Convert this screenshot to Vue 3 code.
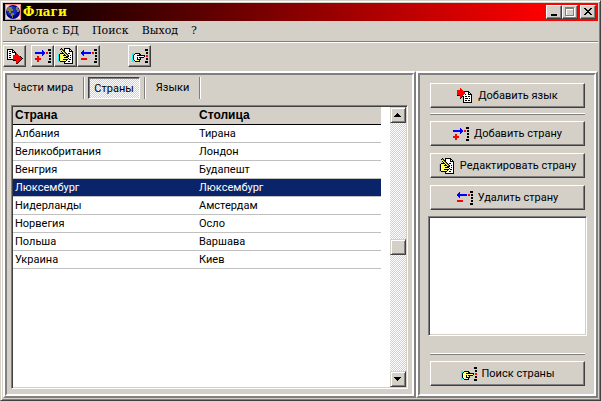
<template>
	<div class="window">
		<header class="title-bar">
			<svg class="title-bar__logo" width="16" height="16" viewBox="0 0 16 16">
				<rect width="16" height="16" fill="#f08080" />
				<rect x="1" y="1" width="14" height="14" fill="#f4d8d8" />
				<circle cx="8" cy="8" r="7" fill="#000084" />
				<circle cx="7" cy="7" r="5" fill="#1830b8" />
				<path d="M3 3h4v2h1v2H6v2H4V7H2V5zM6 9h3v2H8v3H7v-2H6zM11 3h2v2h1v3h-2V6h-1z" fill="#808038" />
			</svg>
			<h1 class="title-bar__text">Флаги</h1>
			<div class="title-bar__controls">
				<button class="sys-btn" aria-label="Свернуть">
					<svg width="12" height="10" viewBox="0 0 12 10" shape-rendering="crispEdges">
						<path d="M3 7h6v2H3z" />
					</svg>
				</button>
				<button class="sys-btn" aria-label="Развернуть" disabled>
					<svg width="12" height="10" viewBox="0 0 12 10" shape-rendering="crispEdges">
						<path d="M2 1h9v9H2zM3 3v6h7V3z" fill="#fff" fill-rule="evenodd" />
						<path d="M1 0h9v9H1zM2 2v6h7V2z" fill="#808080" fill-rule="evenodd" />
					</svg>
				</button>
				<button class="sys-btn sys-btn--close" aria-label="Закрыть">
					<svg width="12" height="10" viewBox="0 0 12 10" shape-rendering="crispEdges">
						<path d="M2 1h2v1h1v1h2V2h1V1h2v1H9v1H8v1H7v1h1v1h1v1h1v1H8V7H7V6H5v1H4v1H2V7h1V6h1V5h1V4H4V3H3V2H2z" />
					</svg>
				</button>
			</div>
		</header>

		<nav class="menu">
			<button v-for="item in menu" :key="item" class="menu__item">{{ item }}</button>
		</nav>

		<div class="toolbar">
			<button v-for="tool in tools" :key="tool.icon" class="tool-btn" :class="{ 'tool-btn--gap': tool.gap, 'tool-btn--far': tool.far }"
				:aria-label="tool.label">
				<svg width="16" height="16" viewBox="0 0 16 16" shape-rendering="crispEdges">
					<path v-for="layer in icons[tool.icon]" :key="layer.fill" :d="layer.d" :fill="layer.fill" />
				</svg>
			</button>
		</div>

		<main class="content">
			<section class="panel panel--main">
				<div class="tabs" role="tablist">
					<button v-for="tab in tabs" :key="tab" class="tabs__item" role="tab" :aria-selected="tab === activeTab"
						@click="activeTab = tab">
						<span class="tabs__label" :class="{ 'tabs__label--active': tab === activeTab }">{{ tab }}</span>
					</button>
				</div>
				<div class="grid">
					<div class="grid__body">
						<table class="table">
							<thead>
								<tr>
									<th>Страна</th>
									<th>Столица</th>
								</tr>
							</thead>
							<tbody>
								<tr v-for="row in countries" :key="row.name" :class="{ selected: row.name === selected }"
									@click="selected = row.name">
									<td>{{ row.name }}</td>
									<td>{{ row.capital }}</td>
								</tr>
							</tbody>
						</table>
					</div>
					<div class="scrollbar">
						<button class="scrollbar__btn" aria-label="Вверх">
							<svg width="8" height="4" viewBox="0 0 8 4" shape-rendering="crispEdges">
								<path d="M3 0h1v1h1v1h1v1h1v1H0V3h1V2h1V1h1z" />
							</svg>
						</button>
						<div class="scrollbar__space"></div>
						<div class="scrollbar__btn"></div>
						<div class="scrollbar__space"></div>
						<button class="scrollbar__btn" aria-label="Вниз">
							<svg width="8" height="4" viewBox="0 0 8 4" shape-rendering="crispEdges">
								<path d="M0 0h7v1H6v1H5v1H4v1H3V3H2V2H1V1H0z" />
							</svg>
						</button>
					</div>
				</div>
			</section>

			<aside class="panel panel--side">
				<button class="action">
					<svg width="16" height="16" viewBox="0 0 16 16" shape-rendering="crispEdges">
						<path v-for="layer in icons.lang" :key="layer.fill" :d="layer.d" :fill="layer.fill" />
					</svg>
					Добавить язык
				</button>
				<hr class="divider">
				<div class="actions">
					<button v-for="action in actions" :key="action.icon" class="action">
						<svg width="16" height="16" viewBox="0 0 16 16" shape-rendering="crispEdges">
							<path v-for="layer in icons[action.icon]" :key="layer.fill" :d="layer.d" :fill="layer.fill" />
						</svg>
						{{ action.label }}
					</button>
				</div>
				<textarea class="memo" aria-label="Описание"></textarea>
				<hr class="divider divider--bottom">
				<button class="action">
					<svg width="16" height="16" viewBox="0 0 16 16" shape-rendering="crispEdges">
						<path v-for="layer in icons.find" :key="layer.fill" :d="layer.d" :fill="layer.fill" />
					</svg>
					Поиск страны
				</button>
			</aside>
		</main>
	</div>
</template>

<script setup>
import { ref } from "vue";

const menu = ["Работа с БД", "Поиск", "Выход", "?"];
const tabs = ["Части мира", "Страны", "Языки"];
const activeTab = ref("Страны");
const selected = ref("Люксембург");

const countries = [
	{ name: "Албания", capital: "Тирана" },
	{ name: "Великобритания", capital: "Лондон" },
	{ name: "Венгрия", capital: "Будапешт" },
	{ name: "Люксембург", capital: "Люксембург" },
	{ name: "Нидерланды", capital: "Амстердам" },
	{ name: "Норвегия", capital: "Осло" },
	{ name: "Польша", capital: "Варшава" },
	{ name: "Украина", capital: "Киев" },
];

const tools = [
	{ icon: "exit", label: "Выход" },
	{ icon: "add", label: "Добавить страну", gap: true },
	{ icon: "edit", label: "Редактировать страну" },
	{ icon: "remove", label: "Удалить страну" },
	{ icon: "find", label: "Поиск страны", far: true },
];

const actions = [
	{ icon: "add", label: "Добавить страну" },
	{ icon: "edit", label: "Редактировать страну" },
	{ icon: "remove", label: "Удалить страну" },
];

const palette = {
	B: "#000000",
	b: "#0000ff",
	r: "#ff0000",
	w: "#ffffff",
	y: "#ffff66",
	o: "#808000",
	c: "#00ffff",
};

// one char per pixel, grouped into a path for each colour
function pixels(rows) {
	const layers = {};
	rows.forEach((row, y) => {
		[...row].forEach((ch, x) => {
			if (palette[ch]) layers[ch] = (layers[ch] || "") + `M${x} ${y}h1v1h-1z`;
		});
	});
	return Object.keys(layers).map((ch) => ({ fill: palette[ch], d: layers[ch] }));
}

const icons = {
	add: pixels([
		"................",
		".............BBB",
		".......b.....BBB",
		".......bb.......",
		"bbbbbbbbbb.rr.BB",
		"bbbbbbbbbb.rr.BB",
		".......bb.......",
		".......b......BB",
		"..rr..........BB",
		"..rr............",
		"rrrrrr........BB",
		"rrrrrr........BB",
		"..rr............",
		"..rr.........BBB",
		".............BBB",
		"................",
	]),
	remove: pixels([
		"................",
		".............BBB",
		"..b..........BBB",
		".bb.............",
		"bbbbbbbbbb.rr.BB",
		"bbbbbbbbbb.rr.BB",
		".bb.............",
		"..b...........BB",
		"..............BB",
		"................",
		"rrrrrr........BB",
		"rrrrrr........BB",
		"................",
		".............BBB",
		".............BBB",
		"................",
	]),
	find: pixels([
		"................",
		".............BBB",
		".............BBB",
		"................",
		"..............BB",
		"cc.BBBBB......BB",
		"ccBywywBB.......",
		"cBywyBBBBBBBB.rr",
		"cBwywywywywyB.rr",
		"cBywyByBBBBB....",
		"cBwywBwyB.....BB",
		"cBywyBBBB.....BB",
		"ccBwywyB........",
		"cc.BBBBB.....BBB",
		".............BBB",
		"................",
	]),
	edit: pixels([
		"...B..BBBBBB....",
		"..BoB.BwwwwBB...",
		"...yoBBwwwwBwB..",
		"...ByoBwwwwBBBB.",
		"....ByoBwwwwwwB.",
		"..BBBByoBwBBwwB.",
		"cByyyyByoBwwwwB.",
		"cByyyBBByoBwBwB.",
		"cByyyyyyBBBwwwB.",
		"cByyyyBBBBwwBwB.",
		"cByyyyyyyyBwwwB.",
		"cByyyBBBBBwBBwB.",
		"cByyyyyyBwwwwwB.",
		"ccBBBBBBwwBBwwB.",
		"......BwwwwwwwB.",
		"......BBBBBBBBB.",
	]),
	exit: pixels([
		"................",
		"BBBBBB..........",
		"BwwwwBB.........",
		"BwBBwBwB........",
		"BwwwwBBBB.......",
		"BwBBwwwwBr......",
		"BwwwwwwwBrr.....",
		"BwBBwwrrrrrr....",
		"BwwwwwrrrrrrrB..",
		"BwBBwwrrrrrrrrB.",
		"BwwwwwrrrrrrrrrB",
		"BBBBBBrrrrrrrrB.",
		"......BBBrrrrB..",
		".........rrrB...",
		".........rrB....",
		".........BB.....",
	]),
	lang: pixels([
		"...r............",
		"...rr...........",
		"rrrrrr..........",
		"rrrrrrrBBBBB....",
		"rrrrrrrrwwwBB...",
		"rrrrrrrrwwwBwB..",
		"rrrrrrrwBwwBBBB.",
		"BBBrrrwwwwwwwwB.",
		"...rrBBwBBwBBwB.",
		"...rB.BwwwwwwwB.",
		"...B..BwBBBwBwB.",
		"......BwwwwwwwB.",
		"......BwBBwBBwB.",
		"......BwwwwwwwB.",
		"......BBBBBBBBB.",
	]),
};
</script>

<style>
body {
	background: #d4d0c8;
}
</style>

<style scoped>
* {
	box-sizing: border-box;
}

button {
	font: inherit;
	color: inherit;
	margin: 0;
	padding: 0;
	border: 0;
	background: none;
}

.window {
	min-height: 100vh;
	display: flex;
	flex-direction: column;
	padding: 2px;
	background: #d4d0c8;
	border: 1px solid;
	border-color: #d4d0c8 #404040 #404040 #d4d0c8;
	box-shadow: inset 1px 1px #fff, inset -1px -1px #808080;
	font: 11px/16px Roboto, "Liberation Sans", Arial, sans-serif;
	color: #000;
}

.title-bar {
	height: 18px;
	display: flex;
	align-items: center;
	padding: 0 2px;
	background: linear-gradient(90deg, #000, #f00 92%);
}

.title-bar__text {
	flex: 1;
	margin: 0 0 0 2px;
	font: bold 12px/16px "DejaVu Serif", serif;
	color: #ff0;
}

.title-bar__controls {
	display: flex;
}

.sys-btn {
	width: 16px;
	height: 14px;
	padding: 1px;
	display: flex;
	background: #d4d0c8;
	border: 1px solid;
	border-color: #fff #404040 #404040 #fff;
	box-shadow: inset -1px -1px #808080;
}

.sys-btn--close {
	margin-left: 2px;
}

.menu {
	display: flex;
	gap: 13px;
	padding: 2px 6px;
	border-bottom: 1px solid #808080;
	box-shadow: 0 1px #fff;
	font: 11px/16px "DejaVu Serif", serif;
}

.toolbar {
	display: flex;
	padding: 3px 0 4px;
}

.tool-btn {
	width: 23px;
	height: 22px;
	display: flex;
	align-items: center;
	justify-content: center;
	border: 1px solid;
	border-color: #fff #404040 #404040 #fff;
	box-shadow: inset -1px -1px #808080;
}

.tool-btn--gap {
	margin-left: 5px;
}

.tool-btn--far {
	margin-left: 28px;
}

.content {
	flex: 1;
	display: flex;
}

.panel {
	display: flex;
	flex-direction: column;
	border: 2px solid;
	border-color: #fff #808080 #808080 #fff;
	position: relative;
}

.panel::before {
	content: "";
	position: absolute;
	inset: 0;
	border: 2px solid;
	border-color: #808080 #fff #fff #808080;
	pointer-events: none;
}

.panel--main {
	flex: 1;
	padding: 4px 6px 7px;
}

.panel--side {
	width: 182px;
	padding: 10px 11px 10px 12px;
}

.tabs {
	display: flex;
	margin-bottom: 6px;
}

.tabs__item {
	display: flex;
	padding: 0 4px;
	border-right: 1px solid #808080;
	box-shadow: 1px 0 #fff;
}

.tabs__item:first-child {
	padding-left: 0;
}

.tabs__item:last-child {
	padding-left: 5px;
}

.tabs__label {
	padding: 2px 5px;
	border: 1px solid transparent;
	line-height: 16px;
}

.tabs__item:first-child .tabs__label {
	padding-left: 1px;
}

.tabs__label--active {
	padding-top: 3px;
	padding-bottom: 1px;
	background: repeating-conic-gradient(#fff 0 25%, #d4d0c8 0 50%) 0 0 / 2px 2px;
	border-color: #404040 #fff #fff #404040;
	box-shadow: inset 1px 1px #808080;
}

.grid {
	flex: 1;
	display: flex;
	background: #fff;
	border: 1px solid;
	border-color: #808080 #fff #fff #808080;
	box-shadow: inset 1px 1px #404040, inset -1px -1px #d4d0c8;
	padding: 1px;
}

.grid__body {
	flex: 1;
	padding-right: 9px;
}

.table {
	width: 100%;
	border-collapse: separate;
	border-spacing: 0;
	table-layout: fixed;
}

.table th,
.table td {
	height: 18px;
	padding: 0 2px;
	text-align: left;
	line-height: 17px;
	border-bottom: 1px solid #c0c0c0;
}

.table th {
	background: #d4d0c8;
	border-color: #000;
	font-family: "Liberation Sans", Arial, sans-serif;
	font-size: 12px;
}

.table .selected td {
	background: #0a246a;
	color: #fff;
}

.scrollbar {
	width: 16px;
	display: flex;
	flex-direction: column;
	background: repeating-conic-gradient(#fff 0 25%, #d4d0c8 0 50%) 0 0 / 2px 2px;
}

.scrollbar__space {
	flex: 1;
}

.scrollbar__btn {
	height: 16px;
	display: flex;
	align-items: center;
	justify-content: center;
	background: #d4d0c8;
	border: 1px solid;
	border-color: #d4d0c8 #404040 #404040 #d4d0c8;
	box-shadow: inset 1px 1px #fff, inset -1px -1px #808080;
}

.actions {
	display: flex;
	flex-direction: column;
	gap: 7px;
}

.action {
	height: 25px;
	display: flex;
	align-items: center;
	justify-content: center;
	gap: 5px;
	border: 1px solid;
	border-color: #fff #404040 #404040 #fff;
	box-shadow: inset -1px -1px #808080;
	white-space: nowrap;
}

.divider {
	width: 100%;
	height: 2px;
	margin: 5px 0 6px;
	border: 0;
	border-top: 1px solid #fff;
	border-bottom: 1px solid #808080;
}

.divider--bottom {
	margin-top: 17px;
}

.memo {
	flex: 1;
	min-height: 40px;
	margin: 6px -2px 0;
	padding: 3px;
	resize: none;
	outline: 0;
	background: #fff;
	border: 1px solid;
	border-color: #808080 #fff #fff #808080;
	border-radius: 0;
	box-shadow: inset 1px 1px #404040, inset -1px -1px #d4d0c8;
	font: inherit;
}
</style>
